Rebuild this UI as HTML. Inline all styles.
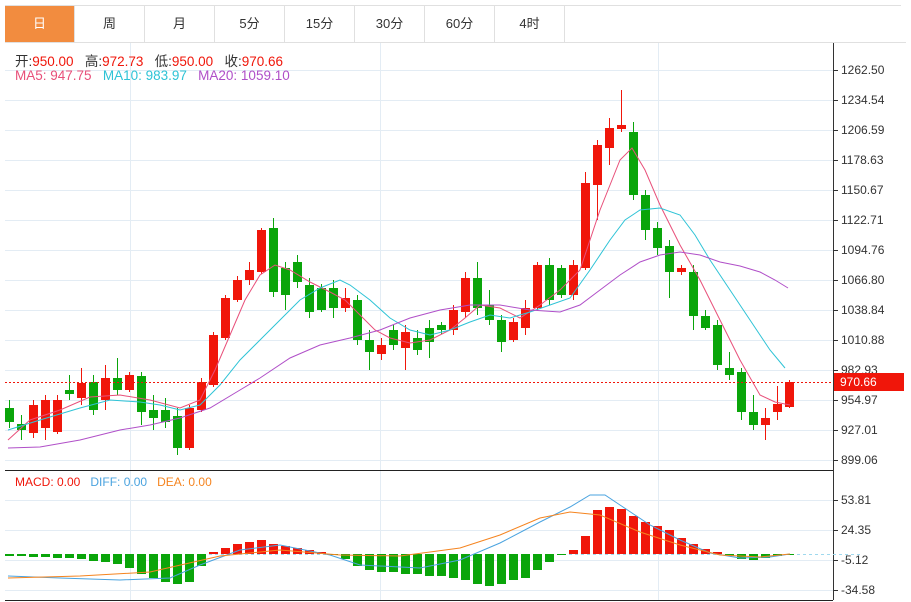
<!DOCTYPE html>
<html><head><meta charset="utf-8"><style>
body{margin:0;width:911px;height:602px;background:#fff;font-family:"Liberation Sans","Noto Sans CJK SC",sans-serif;overflow:hidden;position:relative}
.tabs{position:absolute;left:5px;top:5px;height:36px;display:flex;border-top:1px solid #e0e0e0}
.tab{width:69px;height:36px;border-right:1px solid #e0e0e0;text-align:center;line-height:36px;font-size:13px;color:#333}
.tab.on{background:#f28c3f;color:#fff}
.leg{position:absolute;left:15px;font-size:12px}
.big{font-size:13.5px}
</style></head><body>
<div class="tabs"><div class="tab on">日</div><div class="tab">周</div><div class="tab">月</div><div class="tab">5分</div><div class="tab">15分</div><div class="tab">30分</div><div class="tab">60分</div><div class="tab">4时</div><div class="tab" style="width:336px;border-right:none"></div></div>
<svg id="s" width="911" height="602" style="position:absolute;left:0;top:0"></svg>
<div class="leg big" style="top:50px;color:#333">开:<span style="color:#f0160a">950.00</span>&nbsp;&nbsp; 高:<span style="color:#f0160a">972.73</span>&nbsp;&nbsp; 低:<span style="color:#f0160a">950.00</span>&nbsp;&nbsp; 收:<span style="color:#f0160a">970.66</span></div>
<div class="leg big" style="top:68px"><span style="color:#e8507a">MA5: 947.75</span>&nbsp;&nbsp; <span style="color:#2ec3d6">MA10: 983.97</span>&nbsp;&nbsp; <span style="color:#b04fc8">MA20: 1059.10</span></div>
<div class="leg" style="top:475px"><span style="color:#f0160a">MACD: 0.00</span>&nbsp;&nbsp; <span style="color:#4aa3df">DIFF: 0.00</span>&nbsp;&nbsp; <span style="color:#f5841f">DEA: 0.00</span></div>
<script>
var s='';
function L(x1,y1,x2,y2,c,w,d){s+='<line x1="'+x1+'" y1="'+y1+'" x2="'+x2+'" y2="'+y2+'" stroke="'+c+'" stroke-width="'+(w||1)+'"'+(d?' stroke-dasharray="'+d+'"':'')+'/>';}
function R(x,y,w,h,c){s+='<rect x="'+x+'" y="'+y+'" width="'+w+'" height="'+h+'" fill="'+c+'"/>';}
function T(x,y,t,c){s+='<text x="'+x+'" y="'+y+'" font-size="12" fill="'+(c||'#333')+'" font-family="Liberation Sans,sans-serif">'+t+'</text>';}
var g='#e3ecf4';
[130,380,658].forEach(function(x){L(x+.5,42,x+.5,470,g);L(x+.5,470,x+.5,600,g);});
var pl=['1262.50','1234.54','1206.59','1178.63','1150.67','1122.71','1094.76','1066.80','1038.84','1010.88','982.93','954.97','927.01','899.06'];
pl.forEach(function(p,i){var y=70+30*i;L(5,y+.5,833,y+.5,g);L(833,y+.5,838,y+.5,'#333');T(841,y+4,p);});
['53.81','24.35','-5.12','-34.58'].forEach(function(p,i){var y=500+30*i;L(5,y+.5,833,y+.5,g);L(833,y+.5,838,y+.5,'#333');T(841,y+4,p);});
L(833.5,42,833.5,600,'#333');L(5,470.5,833,470.5,'#222');L(5,600.5,833,600.5,'#222');L(5,42.5,906,42.5,'#e0e0e0');
var c=[[0,408,422,400,428],[0,424,430,415,440],[1,405,433,400,438],[1,400,428,395,440],[1,400,432,395,434],[0,390,394,375,400],[1,383,398,368,405],[0,382,410,375,415],[1,378,400,365,410],[0,378,390,358,395],[1,375,390,372,392],[0,376,412,372,425],[0,410,418,395,430],[0,410,422,398,428],[0,416,448,408,455],[1,408,448,405,450],[1,382,410,378,412],[1,335,385,332,387],[1,298,338,295,340],[1,280,300,276,302],[1,270,280,262,285],[1,230,272,228,274],[0,228,292,218,297],[0,268,295,262,310],[0,262,282,255,288],[0,285,312,278,318],[0,288,310,284,312],[0,288,308,280,318],[1,298,308,288,312],[0,300,340,295,345],[0,340,352,330,370],[1,345,354,338,360],[0,330,345,325,350],[1,332,348,325,370],[0,338,350,330,355],[0,328,342,320,358],[0,325,330,322,334],[1,310,330,305,335],[1,278,312,272,318],[0,278,308,262,315],[0,305,320,290,325],[0,320,342,315,352],[1,322,340,318,342],[1,308,328,300,335],[1,265,308,262,310],[0,265,300,258,305],[0,268,295,265,298],[1,265,295,260,300],[1,183,268,172,270],[1,145,185,140,220],[1,128,148,118,165],[1,125,129,90,132],[0,132,195,122,200],[0,195,230,190,240],[0,228,248,222,255],[0,246,272,240,298],[1,268,272,265,275],[0,272,316,265,330],[0,316,328,310,330],[0,325,365,320,370],[0,368,375,352,380],[0,372,412,368,420],[0,412,425,395,430],[1,418,425,408,440],[1,404,412,386,420],[1,382,407,380,408]];
c.forEach(function(d,i){var x=9+12*i,col=d[0]?'#f0160a':'#0aa50a';L(x+.5,d[3],x+.5,d[4],col);R(x-4,d[1],9,Math.max(1,d[2]-d[1]),col);});
function P(pts,col){s+='<polyline fill="none" stroke="'+col+'" stroke-width="1" points="'+pts+'"/>';}
P('8,440 30,420 60,410 90,397 120,395 150,400 180,408 200,400 215,370 230,335 245,300 260,275 275,265 290,270 310,282 330,292 345,300 360,315 375,330 390,338 410,343 430,340 450,330 465,318 480,305 500,308 520,318 540,305 560,290 580,270 600,210 620,160 632,148 645,170 660,205 680,245 700,280 720,320 740,360 760,395 775,402 790,405','#e8507a');
P('8,430 40,420 80,408 110,400 140,402 160,405 180,410 200,405 220,385 240,360 260,340 280,320 300,300 320,288 340,280 350,285 370,300 390,318 410,330 430,335 450,330 470,322 490,315 510,318 530,312 550,305 570,298 590,270 610,240 625,220 640,210 660,208 680,215 695,235 710,260 730,290 750,320 770,350 785,368','#2ec3d6');
P('8,448 40,447 80,440 120,430 150,425 180,418 210,408 240,390 260,378 290,358 320,345 350,338 380,330 410,318 440,310 470,305 500,305 530,310 560,312 580,305 600,290 620,275 640,262 660,255 680,252 700,255 720,262 740,266 760,272 775,280 788,288','#b04fc8');
L(5,382.5,833,382.5,'#f0160a',1,'2,2');
R(834,373,70,18,'#f0160a');s+='<text x="840" y="386" font-size="12" fill="#fff" font-family="Liberation Sans,sans-serif">970.66</text>';
L(5,554.5,860,554.5,'#9fd9ee',1,'3,3');
var h=[-2,-2,-3,-3,-4,-4,-5,-7,-8,-10,-14,-20,-24,-28,-30,-28,-12,2,6,10,12,14,10,8,6,4,2,-1,-5,-12,-16,-18,-18,-20,-20,-22,-22,-24,-26,-30,-32,-30,-26,-24,-16,-8,-1,4,18,44,47,45,38,32,28,24,16,10,5,2,-2,-5,-6,-4,-2,-1];
h.forEach(function(v,i){var x=9+12*i;if(v>0)R(x-4,554-v,9,v,'#f0160a');else R(x-4,554,9,Math.max(1,-v),'#0aa50a');});
P('8,576 60,578 120,580 170,578 200,565 240,550 280,545 330,555 360,565 420,568 460,560 500,543 540,522 570,507 590,495 605,495 620,505 650,525 680,540 710,553 740,558 770,557 790,554','#4aa3df');
P('8,578 80,576 150,572 220,556 280,550 340,555 400,556 460,548 500,535 540,518 570,512 600,515 640,532 680,545 720,555 760,557 790,554','#f5841f');
document.getElementById('s').innerHTML=s;
</script>
</body></html>
